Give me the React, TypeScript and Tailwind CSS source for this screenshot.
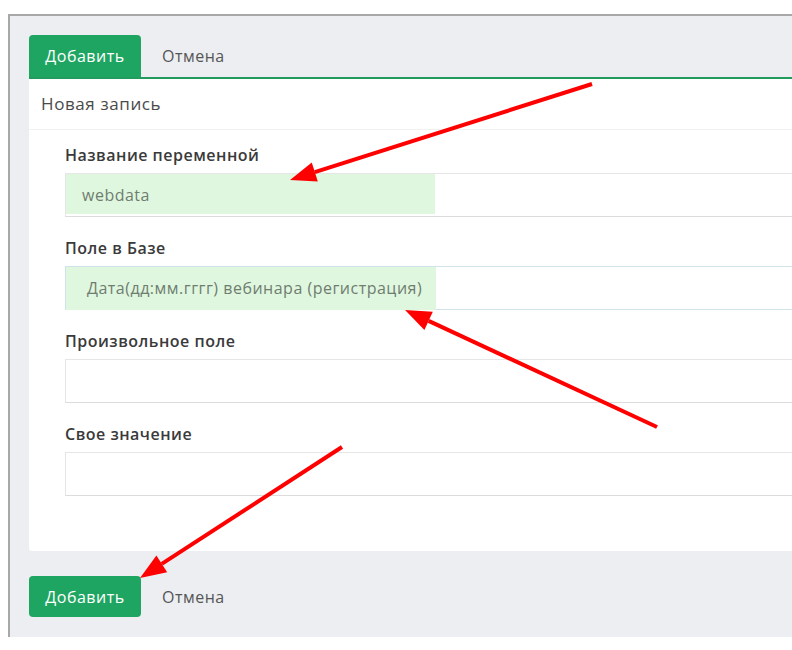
import React from "react";

const font = { fontFamily: "'Open Sans', sans-serif" };

function Field({
  label,
  value,
  highlight,
  focused,
  pad,
}: {
  label: string;
  value?: string;
  highlight?: number;
  focused?: boolean;
  pad?: number;
}) {
  return (
    <div className="flex flex-col">
      <div className="h-[20px] leading-[20px] text-[16px] font-semibold text-[#3a3a3a] tracking-[0.5px]">{label}</div>
      <div
        className={
          "relative mt-[8px] h-[44px] w-[760px] bg-white border " +
          (focused ? "border-[#cfe3e8]" : "border-[#e6e6e6] border-b-[#dcdcdc]")
        }
      >
        {highlight ? (
          <div
            className={"absolute left-0 top-0 bg-[#dff7df] " + (focused ? "h-[43px]" : "h-[40px]")}
            style={{ width: highlight }}
          />
        ) : null}
        {value ? (
          <div
            className="relative h-full flex items-center text-[16px] text-[#6f7d70] tracking-[0.5px]"
            style={{ paddingLeft: pad }}
          >
            {value}
          </div>
        ) : null}
      </div>
    </div>
  );
}

export default function App() {
  return (
    <div className="relative w-[792px] h-[650px] bg-white overflow-hidden" style={font}>
      <div className="mt-[14px] ml-[8px] h-[623px] border-t-2 border-l-2 border-[#a8a8a8] bg-[#eceef2] pt-[19px] pl-[19px] flex flex-col">
        <div className="flex items-center h-[42px]">
          <div className="w-[112px] h-[42px] rounded-t-[4px] bg-[#1fa562] text-white text-[16px] tracking-[0.5px] flex items-center justify-center">
            Добавить
          </div>
          <div className="ml-[21px] text-[16px] tracking-[0.5px] text-[#555]">Отмена</div>
        </div>
        <div className="h-[2px] bg-[#229c5e]" />
        <div className="bg-white h-[472px] flex flex-col rounded-bl-[3px]">
          <div className="h-[51px] px-[12px] flex items-center border-b border-[#f1f1f1] text-[17px] tracking-[0.6px] text-[#4a4a4a]">
            Новая запись
          </div>
          <div className="pl-[36px] pt-[15px] flex flex-col gap-[21px]">
            <Field label="Название переменной" value="webdata" highlight={369} pad={16} />
            <Field label="Поле в Базе" value="Дата(дд:мм.гггг) вебинара (регистрация)" highlight={370} focused pad={21} />
            <Field label="Произвольное поле" />
            <Field label="Свое значение" />
          </div>
        </div>
        <div className="flex items-center mt-[25px]">
          <div className="w-[112px] h-[41px] rounded-[4px] bg-[#1fa562] text-white text-[16px] tracking-[0.5px] flex items-center justify-center">
            Добавить
          </div>
          <div className="ml-[21px] text-[16px] tracking-[0.5px] text-[#555]">Отмена</div>
        </div>
      </div>

      <svg className="absolute inset-0 pointer-events-none" width="792" height="650" viewBox="0 0 792 650">
        <g stroke="#ff0000" strokeWidth="4" strokeLinecap="butt">
          <line x1="592" y1="84" x2="314.8" y2="172.1" />
          <line x1="657" y1="427" x2="428.6" y2="320.9" />
          <line x1="342" y1="447" x2="161.8" y2="563.9" />
        </g>
        <g fill="#ff0000">
          <polygon points="290,180 311.8,162.6 317.8,181.6" />
          <polygon points="405,310 432.8,311.8 424.4,330.0" />
          <polygon points="140,578 156.4,555.5 167.2,572.3" />
        </g>
      </svg>
    </div>
  );
}
